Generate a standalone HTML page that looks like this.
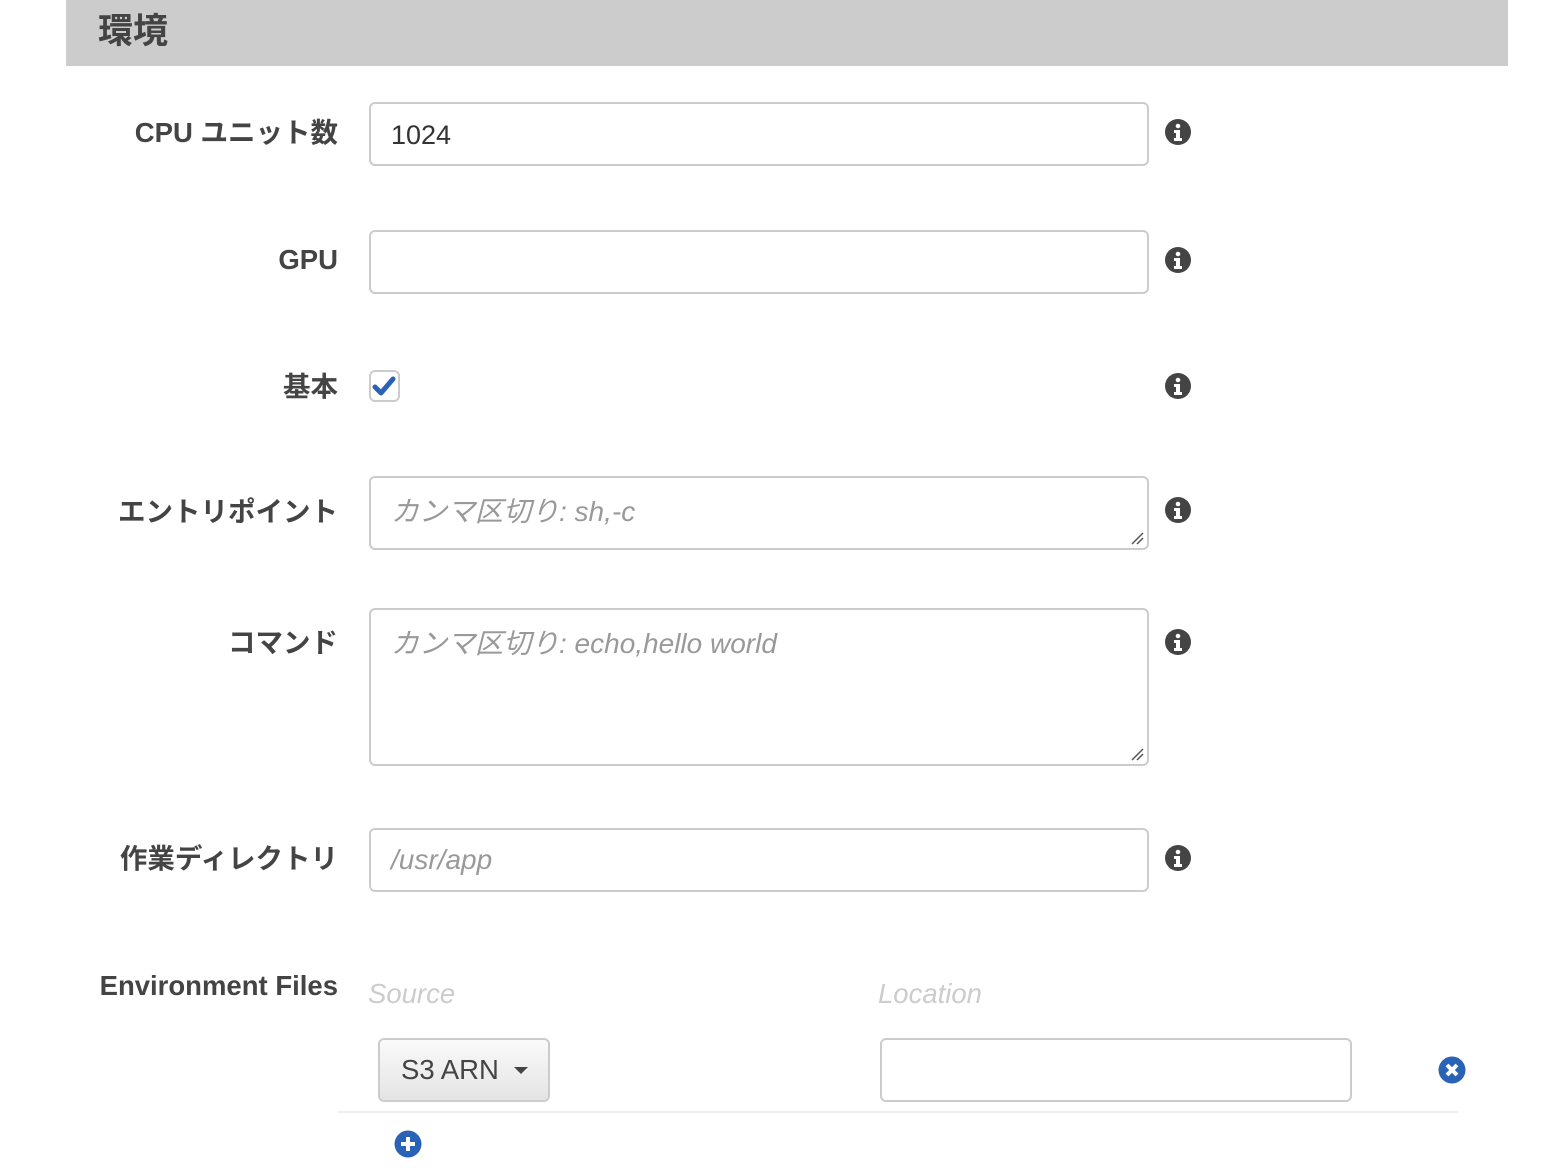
<!DOCTYPE html>
<html><head><meta charset="utf-8"><style>
*{box-sizing:border-box;margin:0;padding:0}
body{width:1568px;height:1174px;background:#fff;position:relative;overflow:hidden;font-family:"Liberation Sans","Noto Sans CJK JP",sans-serif;color:#444}
.hdr{position:absolute;left:66px;top:0;width:1442px;height:66px;background:#ccc}
.hdr span{position:absolute;left:32px;top:11px;font-size:35px;font-weight:bold;color:#444;line-height:42px}
.lab{position:absolute;right:1230px;font-size:27.5px;font-weight:bold;line-height:32px;white-space:nowrap;color:#444}
.in{position:absolute;left:369px;width:780px;border:2px solid #ccc;border-radius:6px;background:#fff;font-size:27px;line-height:32px;padding:15px 20px;color:#333}
.ph{color:#999;font-style:italic;font-size:28px;padding-top:18px}
.info{position:absolute;left:1165px;width:26px;height:26px}
.rs{position:absolute;right:3px;bottom:3px;width:14px;height:14px}
</style></head><body>
<div class="hdr"><span>環境</span></div>

<div class="lab" style="top:117px">CPU ユニット数</div>
<div class="in" style="top:102px;height:64px">1024</div>

<div class="lab" style="top:244px">GPU</div>
<div class="in" style="top:230px;height:64px"></div>

<div class="lab" style="top:371px">基本</div>
<div style="position:absolute;left:369px;top:370px;width:31px;height:32px;border:2px solid #ccc;border-radius:6px;background:#fff">
<svg width="27" height="28" viewBox="0 0 27 28" style="position:absolute;left:0;top:0"><path d="M4 15 L10 21 L22 7" fill="none" stroke="#2a63b5" stroke-width="5" stroke-linecap="round" stroke-linejoin="round"/></svg></div>

<div class="lab" style="top:496px">エントリポイント</div>
<div class="in ph" style="top:476px;height:74px">カンマ区切り: sh,-c<svg class="rs" viewBox="0 0 14 14"><path d="M2 13 L13 2 M7 13 L13 7" stroke="#555" stroke-width="1.5"/></svg></div>

<div class="lab" style="top:627px">コマンド</div>
<div class="in ph" style="top:608px;height:158px">カンマ区切り: echo,hello world<svg class="rs" viewBox="0 0 14 14"><path d="M2 13 L13 2 M7 13 L13 7" stroke="#555" stroke-width="1.5"/></svg></div>

<div class="lab" style="top:843px">作業ディレクトリ</div>
<div class="in ph" style="top:828px;height:64px;padding-top:14px">/usr/app</div>

<svg class="info" style="top:119px" viewBox="0 0 26 26"><circle cx="13" cy="13" r="13" fill="#444"/><circle cx="13" cy="7" r="2.3" fill="#fff"/><path d="M9 11h6v8h2v3H9v-3h2v-5H9z" fill="#fff"/></svg>
<svg class="info" style="top:247px" viewBox="0 0 26 26"><circle cx="13" cy="13" r="13" fill="#444"/><circle cx="13" cy="7" r="2.3" fill="#fff"/><path d="M9 11h6v8h2v3H9v-3h2v-5H9z" fill="#fff"/></svg>
<svg class="info" style="top:373px" viewBox="0 0 26 26"><circle cx="13" cy="13" r="13" fill="#444"/><circle cx="13" cy="7" r="2.3" fill="#fff"/><path d="M9 11h6v8h2v3H9v-3h2v-5H9z" fill="#fff"/></svg>
<svg class="info" style="top:497px" viewBox="0 0 26 26"><circle cx="13" cy="13" r="13" fill="#444"/><circle cx="13" cy="7" r="2.3" fill="#fff"/><path d="M9 11h6v8h2v3H9v-3h2v-5H9z" fill="#fff"/></svg>
<svg class="info" style="top:629px" viewBox="0 0 26 26"><circle cx="13" cy="13" r="13" fill="#444"/><circle cx="13" cy="7" r="2.3" fill="#fff"/><path d="M9 11h6v8h2v3H9v-3h2v-5H9z" fill="#fff"/></svg>
<svg class="info" style="top:845px" viewBox="0 0 26 26"><circle cx="13" cy="13" r="13" fill="#444"/><circle cx="13" cy="7" r="2.3" fill="#fff"/><path d="M9 11h6v8h2v3H9v-3h2v-5H9z" fill="#fff"/></svg>

<div class="lab" style="top:970px">Environment Files</div>
<div style="position:absolute;left:368px;top:978px;font-size:27.5px;font-style:italic;color:#ccc;line-height:32px">Source</div>
<div style="position:absolute;left:878px;top:978px;font-size:27.5px;font-style:italic;color:#ccc;line-height:32px">Location</div>

<div style="position:absolute;left:378px;top:1038px;width:172px;height:64px;border:2px solid #ccc;border-radius:6px;background:linear-gradient(#fafafa,#e4e4e4);font-size:27.5px;line-height:60px;padding-left:21px;color:#444">S3 ARN<span style="position:absolute;left:134px;top:27px;width:0;height:0;border-left:7px solid transparent;border-right:7px solid transparent;border-top:7px solid #444"></span></div>
<div style="position:absolute;left:880px;top:1038px;width:472px;height:64px;border:2px solid #ccc;border-radius:6px;background:#fff"></div>
<svg style="position:absolute;left:1438px;top:1056px" width="28" height="28" viewBox="0 0 28 28"><circle cx="14" cy="14" r="13.5" fill="#2a63b5"/><path d="M9 9L19 19M19 9L9 19" stroke="#fff" stroke-width="4"/></svg>
<div style="position:absolute;left:338px;top:1111px;width:1120px;height:2px;background:#eee"></div>
<svg style="position:absolute;left:394px;top:1130px" width="28" height="28" viewBox="0 0 28 28"><circle cx="14" cy="14" r="13.5" fill="#2a63b5"/><path d="M14 7V21M7 14H21" stroke="#fff" stroke-width="4"/></svg>
</body></html>
